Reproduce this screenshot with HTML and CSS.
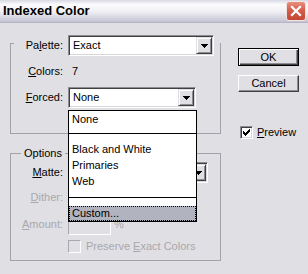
FILE: index.html
```
<!DOCTYPE html>
<html>
<head>
<meta charset="utf-8">
<link rel="stylesheet" href="styles.css">
</head>
<body>
<div class="titlebar">
  <span class="title">Indexed Color</span>
  <span class="close"><svg width="14" height="14" viewBox="0 0 14 14"><path d="M3 3L11 11M11 3L3 11" stroke="#fff" stroke-width="2.2" stroke-linecap="square"/></svg></span>
</div>
<div class="main">
  <div class="left">
    <div class="group g1">
      <div class="legend1">
        <span class="lbl lbl-legend">Pa<u>l</u>ette:</span>
        <div class="select w-palette"><span class="val">Exact</span><span class="arrow"><svg width="7" height="4" viewBox="0 0 7 4" shape-rendering="crispEdges"><path d="M0 0h7v1h-1v1h-1v1h-1v1h-1v-1h-1v-1h-1v-1h-1z" fill="#000"/></svg></span></div>
      </div>
      <div class="row row-colors"><span class="lbl"><u>C</u>olors:</span><span class="val">7</span></div>
      <div class="row row-forced">
        <span class="lbl"><u>F</u>orced:</span>
        <div class="select w-forced"><span class="val">None</span><span class="arrow"><svg width="7" height="4" viewBox="0 0 7 4" shape-rendering="crispEdges"><path d="M0 0h7v1h-1v1h-1v1h-1v1h-1v-1h-1v-1h-1v-1h-1z" fill="#000"/></svg></span></div>
      </div>
    </div>
    <div class="group g2">
      <div class="legend2">Options</div>
      <div class="row row-matte">
        <span class="lbl"><u>M</u>atte:</span>
        <div class="select w-matte"><span class="val"></span><span class="arrow"><svg width="7" height="4" viewBox="0 0 7 4" shape-rendering="crispEdges"><path d="M0 0h7v1h-1v1h-1v1h-1v1h-1v-1h-1v-1h-1v-1h-1z" fill="#000"/></svg></span></div>
      </div>
      <div class="row row-dither disabled">
        <span class="lbl"><u>D</u>ither:</span>
        <div class="select w-forced off"><span class="val"></span></div>
      </div>
      <div class="row row-amount disabled">
        <span class="lbl"><u>A</u>mount:</span>
        <div class="field"></div>
        <span class="pct">%</span>
      </div>
      <div class="row row-preserve disabled">
        <span class="lbl"></span>
        <span class="check off"></span>
        <span class="ctext">Preserve <u>E</u>xact Colors</span>
      </div>
    </div>
  </div>
  <div class="right">
    <div class="btn btn-default">OK</div>
    <div class="btn btn-cancel">Cancel</div>
    <div class="preview">
      <span class="check on"><svg width="7" height="7" viewBox="0 0 7 7" shape-rendering="crispEdges"><path d="M6 0h1v3h-1v1h-1v1h-1v1h-1v1h-1v-1h-1v-1h-1v-3h1v1h1v1h1v-1h1v-1h1v-1h1z" fill="#000"/></svg></span>
      <span class="ctext"><u>P</u>review</span>
    </div>
  </div>
</div>
<ul class="dropdown">
  <li class="item item-first">None</li>
  <li class="sep sep1"></li>
  <li class="item">Black and White</li>
  <li class="item">Primaries</li>
  <li class="item">Web</li>
  <li class="sep sep2"></li>
  <li class="item selected">Custom...</li>
</ul>
</body>
</html>
```
FILE: styles.css
```
html, body {
  margin: 0;
  padding: 0;
}
body {
  width: 308px;
  height: 274px;
  overflow: hidden;
  position: relative;
  background: #e0dfe3;
  font: 11px/13px "Liberation Sans", Arial, sans-serif;
  color: #000;
}
u { text-decoration: underline; text-underline-offset: 1px; }

.titlebar {
  height: 22px;
  border-bottom: 1px solid #b5b5c5;
  display: flex;
  align-items: center;
  justify-content: space-between;
  padding: 0 2px 0 3px;
  background: linear-gradient(to bottom, #d8d8e4 0, #fbfbfd 20%, #f2f2f6 50%, #d6d6e2 80%, #c2c2d2 100%);
}
.title {
  font: bold 13px/16px "Liberation Sans", Arial, sans-serif;
  color: #000;
}
.close {
  width: 20px;
  height: 20px;
  box-sizing: border-box;
  border: 1px solid #f3e3e0;
  border-radius: 3px;
  background: linear-gradient(to bottom, #e8907f 0, #d65e4c 45%, #c44634 100%);
  display: flex;
  align-items: center;
  justify-content: center;
}

.main {
  display: flex;
  padding-left: 10px;
}
.left {
  width: 211px;
  padding-top: 20px;
}
.group {
  border: 1px solid #a3a2a9;
}
.g1 { padding-bottom: 25px; }
.g2 { margin-top: 19px; padding-bottom: 7px; }

.legend1 {
  display: flex;
  align-items: center;
  gap: 5px;
  height: 21px;
  margin: -9px 0 0 3px;
  background: #e0dfe3;
}
.legend2 {
  align-self: flex-start;
  width: max-content;
  margin: -7px 0 0 10px;
  padding: 0 3px;
  background: #e0dfe3;
  line-height: 13px;
}

.row {
  display: flex;
  align-items: center;
  gap: 5px;
}
.lbl {
  width: 52px;
  flex: none;
  text-align: right;
}
.lbl-legend { width: 49px; }
.row-colors { height: 18px; margin-top: 6px; }
.row-colors .val { margin-left: 4px; }
.row-forced { margin-top: 7px; }
.row-matte { margin-top: 2px; }
.row-dither { margin-top: 4px; }
.row-amount { margin-top: 6px; }
.row-preserve { margin-top: 5px; height: 13px; }

.disabled { color: #a9a8ae; }

.select {
  height: 21px;
  box-sizing: border-box;
  border: 1px solid;
  border-color: #8d8c92 #ffffff #ffffff #8d8c92;
  box-shadow: inset 1px 1px #404040, inset -1px -1px #d8d7dc;
  background: #fff;
  display: flex;
  align-items: center;
  padding: 1px 1px 1px 4px;
}
.select.off { background: #e0dfe3; }
.w-palette { width: 146px; }
.w-forced { width: 128px; }
.w-matte { width: 140px; }
.select .val { flex: 1; }
.arrow {
  width: 16px;
  height: 17px;
  box-sizing: border-box;
  flex: none;
  background: #e0dfe3;
  border: 1px solid;
  border-color: #e0dfe3 #404040 #404040 #e0dfe3;
  box-shadow: inset 1px 1px #ffffff, inset -1px -1px #8d8c92;
  display: flex;
  align-items: center;
  justify-content: center;
}

.field {
  width: 43px;
  height: 21px;
  box-sizing: border-box;
  border: 1px solid;
  border-color: #a9a8ae #ffffff #ffffff #a9a8ae;
  background: #e0dfe3;
}
.pct { margin-left: -2px; }

.check {
  width: 13px;
  height: 13px;
  box-sizing: border-box;
  flex: none;
  border: 1px solid;
  display: flex;
  align-items: center;
  justify-content: center;
}
.check.off {
  border-color: #a9a8ae #ffffff #ffffff #a9a8ae;
  background: #e0dfe3;
}
.check.on {
  border-color: #8d8c92 #ffffff #ffffff #8d8c92;
  box-shadow: inset 1px 1px #404040, inset -1px -1px #d8d7dc;
  background: #fff;
}
.row-preserve .ctext { margin-left: 0; }

.right {
  margin-left: 17px;
  padding-top: 25px;
  display: flex;
  flex-direction: column;
  align-items: flex-start;
}
.btn {
  width: 61px;
  box-sizing: border-box;
  display: flex;
  align-items: center;
  justify-content: center;
  background: #e0dfe3;
}
.btn-default {
  height: 18px;
  border: 1px solid #000;
  box-shadow: inset 1px 1px #ffffff, inset -1px -1px #404040, inset -2px -2px #8d8c92;
}
.btn-cancel {
  height: 17px;
  margin-top: 9px;
  border: 1px solid;
  border-color: #ffffff #404040 #404040 #ffffff;
  box-shadow: inset -1px -1px #8d8c92;
}
.preview {
  margin-top: 34px;
  margin-left: 2px;
  display: flex;
  align-items: center;
  gap: 4px;
}

.dropdown {
  position: absolute;
  left: 68px;
  top: 110px;
  width: 129px;
  height: 112px;
  box-sizing: border-box;
  margin: 0;
  padding: 0;
  list-style: none;
  border: 1px solid #000;
  background: #fff;
}
.item {
  height: 16px;
  line-height: 16px;
  padding-left: 3px;
}
.item-first { height: 16px; }
.sep {
  position: relative;
}
.sep::after {
  content: "";
  position: absolute;
  left: 0;
  right: 0;
  height: 1px;
  background: #000;
}
.sep1 { height: 14px; }
.sep1::after { top: 6px; }
.sep2 { height: 17px; }
.sep2::after { top: 8px; }
.selected {
  height: 15px;
  line-height: 13px;
  box-sizing: border-box;
  border: 1px dotted #000;
  padding-left: 2px;
  background: #b1b3bf;
}
```
